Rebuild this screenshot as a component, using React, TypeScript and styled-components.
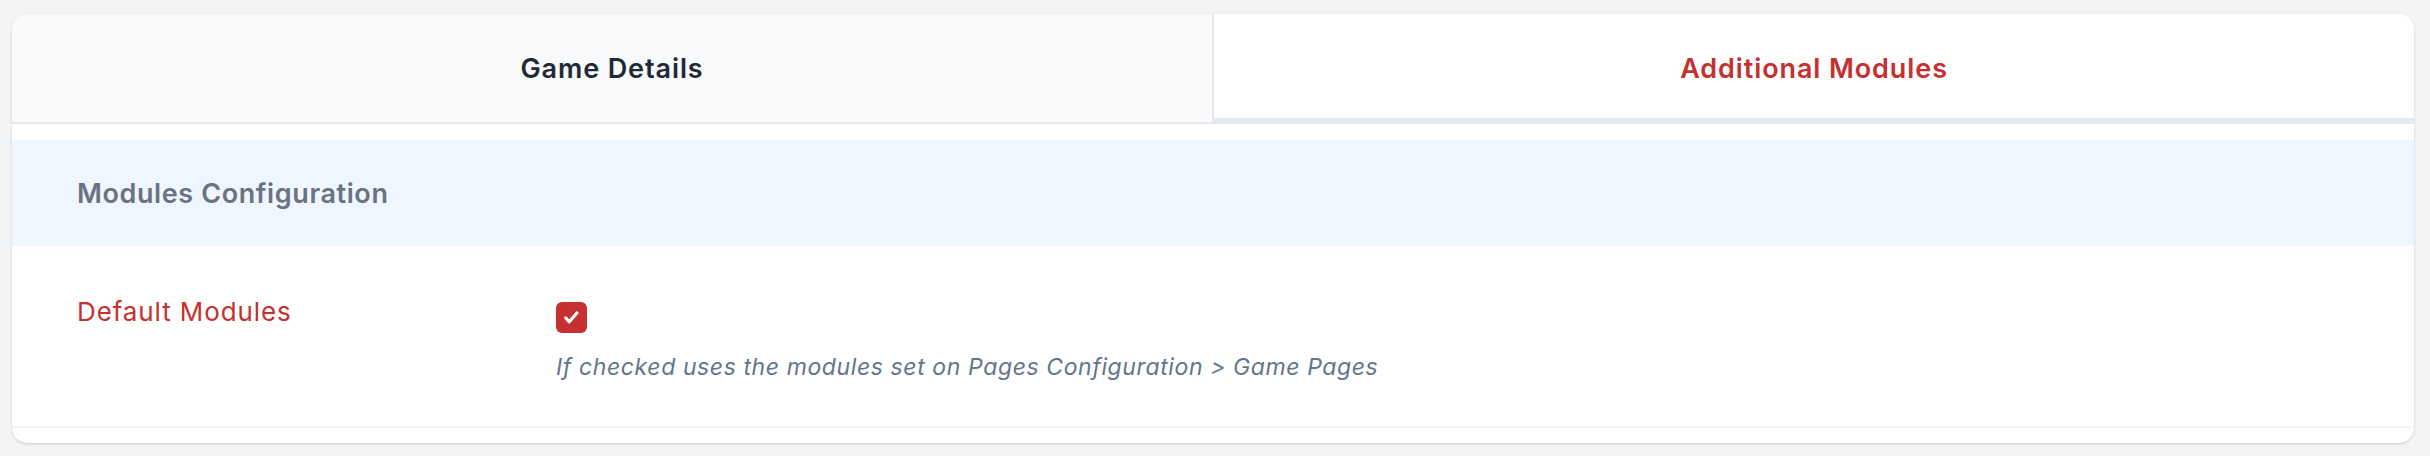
import styled, { createGlobalStyle } from 'styled-components';

const GlobalStyle = createGlobalStyle`
  html, body {
    margin: 0;
    padding: 0;
    background: #f3f4f6;
    font-family: Inter, "Noto Sans", "Liberation Sans", sans-serif;
  }
`;

interface TabItem {
  id: string;
  label: string;
}

const tabs: Array<TabItem> = [
  { id: 'details', label: 'Game Details' },
  { id: 'modules', label: 'Additional Modules' },
];

function CheckIcon() {
  return (
    <svg width="31" height="31" viewBox="0 0 31 31" fill="none">
      <path
        d="M9.8 16l3.5 3.8 7.6-8.8"
        stroke="#fff"
        strokeWidth="3.2"
        strokeLinecap="round"
        strokeLinejoin="round"
      />
    </svg>
  );
}

export default function App() {
  const activeTab = 'modules';

  return (
    <>
      <GlobalStyle />
      <Page>
        <Card>
          <TabBar>
            {tabs.map((tab) => (
              <Tab key={tab.id} $active={tab.id === activeTab}>
                {tab.label}
              </Tab>
            ))}
          </TabBar>
          <Body>
            <SectionHeader>Modules Configuration</SectionHeader>
            <FieldRow>
              <FieldLabel>Default Modules</FieldLabel>
              <FieldValue>
                <CheckBox role="checkbox" aria-checked="true">
                  <CheckIcon />
                </CheckBox>
                <HelpText>
                  If checked uses the modules set on Pages Configuration &gt; Game Pages
                </HelpText>
              </FieldValue>
            </FieldRow>
          </Body>
        </Card>
      </Page>
    </>
  );
}

const Page = styled.div`
  padding: 14px 16px 13px 12px;
`;

const Card = styled.div`
  background: #fff;
  border-radius: 15px;
  overflow: hidden;
  box-shadow: 0 1px 3px rgba(0, 0, 0, 0.12), 0 1px 2px rgba(0, 0, 0, 0.06);
`;

const TabBar = styled.div`
  display: flex;
  border-bottom: 2px solid #e5e7eb;
`;

const Tab = styled.div<{ $active: boolean }>`
  flex: 1;
  height: 108px;
  box-sizing: border-box;
  display: flex;
  align-items: center;
  justify-content: center;
  font-size: 27px;
  font-weight: 600;
  letter-spacing: 0.9px;
  color: ${({ $active }) => ($active ? '#c53030' : '#1f2937')};
  background: ${({ $active }) => ($active ? '#fff' : '#f9fafb')};
  border-bottom: ${({ $active }) => ($active ? '4px solid #e2e8f0' : 'none')};
  padding-top: ${({ $active }) => ($active ? '4px' : '0')};

  &:first-child {
    border-right: 2px solid #e5e7eb;
  }
`;

const Body = styled.div`
  padding: 16px 0 15px;
`;

const SectionHeader = styled.div`
  height: 106px;
  display: flex;
  align-items: center;
  padding-left: 65px;
  background: #eff6ff;
  color: #6b7280;
  font-size: 27px;
  font-weight: 600;
  letter-spacing: 0.6px;
`;

const FieldRow = styled.div`
  display: grid;
  grid-template-columns: 479px 1fr;
  padding: 50px 65px 44px;
  border-bottom: 2px solid #f3f4f6;
`;

const FieldLabel = styled.div`
  font-size: 26px;
  line-height: 32px;
  letter-spacing: 0.9px;
  color: #c53030;
`;

const FieldValue = styled.div`
  display: flex;
  flex-direction: column;
  align-items: flex-start;
`;

const CheckBox = styled.div`
  margin-top: 6px;
  width: 31px;
  height: 31px;
  border-radius: 6px;
  background: #c53030;
  display: flex;
  align-items: center;
  justify-content: center;
`;

const HelpText = styled.div`
  margin-top: 19px;
  font-size: 23px;
  line-height: 30px;
  letter-spacing: 0.6px;
  font-style: italic;
  color: #64748b;
`;
